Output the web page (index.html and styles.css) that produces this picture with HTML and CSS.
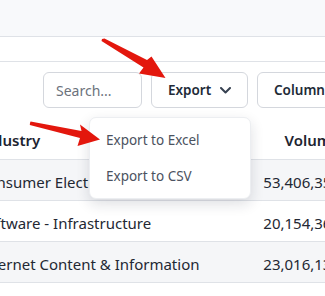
FILE: index.html
```html
<!DOCTYPE html>
<html lang="en">
<head>
  <meta charset="UTF-8" />
  <title>Stocks table</title>
  <link rel="stylesheet" href="styles.css">
</head>
<body>
  <div class="page">
    <div class="topbar"></div>
    <div class="subbar"></div>

    <div class="toolbar">
      <input class="search" type="text" placeholder="Search..." />
      <div class="export-wrap">
        <button class="btn export-btn">Export
          <svg class="chevron" width="11" height="7" viewBox="0 0 11 7">
            <path d="M1 1 L5.5 5.5 L10 1" fill="none" stroke="#374151" stroke-width="2" stroke-linecap="round" stroke-linejoin="round"/>
          </svg>
        </button>
        <div class="menu">
          <div class="menu-item">Export to Excel</div>
          <div class="menu-item">Export to CSV</div>
        </div>
      </div>
      <button class="btn">Columns</button>
    </div>

    <div class="table-wrap">
      <table class="grid">
        <thead>
          <tr><th class="col-industry">Industry</th><th class="num">Volume</th></tr>
        </thead>
        <tbody>
          <tr><td>Consumer Electronics</td><td class="num">53,406,357</td></tr>
          <tr><td>Software - Infrastructure</td><td class="num">20,154,362</td></tr>
          <tr><td>Internet Content &amp; Information</td><td class="num">23,016,132</td></tr>
        </tbody>
      </table>
    </div>
  </div>

  <!-- annotation arrows -->
  <svg class="arrows" width="325" height="296" viewBox="0 0 325 296">
    <polygon fill="#e3170d" points="102,39 104.5,38.6 147,60 151.5,56.5 165.5,78 139,73.5 143.5,67.5 101.5,41"/>
    <polygon fill="#e3170d" points="30,123 30.6,121.5 81.5,131 80,124.5 100,139.5 77.5,146 80,138 29.8,125"/>
  </svg>
</body>
</html>
```

FILE: styles.css
```css
body {
  margin: 0;
  font-family: 'Noto Sans', 'Open Sans', sans-serif;
  color: #212529;
  background: #fff;
  overflow: hidden;
  width: 325px;
  height: 296px;
  position: relative;
}
.page {
  width: 325px;
}
.topbar {
  height: 36px;
  background: #f8f9fb;
  border-bottom: 1px solid #dfe2e7;
}
.subbar {
  height: 24px;
  border-bottom: 1px solid #dfe2e7;
}
.toolbar {
  display: flex;
  gap: 9px;
  padding: 10px 0 10px 43px;
  white-space: nowrap;
}
.search {
  width: 99px;
  height: 36px;
  box-sizing: border-box;
  border: 1px solid #d4d7dd;
  border-radius: 6px;
  padding: 0 12px;
  font-family: inherit;
  font-size: 14px;
  color: #212529;
  outline: none;
}
.search::placeholder {
  color: #6c727c;
}
.btn {
  height: 36px;
  box-sizing: border-box;
  border: 1px solid #d4d7dd;
  border-radius: 6px;
  background: #fff;
  padding: 0 16px;
  font-family: inherit;
  font-size: 13.5px;
  font-weight: 600;
  color: #212a37;
  display: flex;
  align-items: center;
  flex-shrink: 0;
}
.export-wrap {
  position: relative;
}
.export-btn {
  width: 97px;
  justify-content: space-between;
}
.chevron {
  margin-top: 1px;
}
.menu {
  position: absolute;
  top: 45px;
  left: -62px;
  width: 160px;
  padding: 4px 0;
  background: #fff;
  border: 1px solid #eceef1;
  border-radius: 7px;
  box-shadow: 0 5px 14px rgba(20, 30, 50, 0.14);
  z-index: 2;
}
.menu-item {
  height: 36px;
  line-height: 36px;
  padding-left: 16px;
  font-size: 13.5px;
  color: #4b5260;
}
.table-wrap {
  margin-left: -22px;
}
.grid {
  border-collapse: collapse;
  width: 370px;
  font-size: 15px;
}
.grid th {
  height: 41px;
  box-sizing: border-box;
  text-align: left;
  font-weight: 600;
  color: #1d2430;
  border-bottom: 1px solid #dfe2e7;
  padding: 3px 0 0;
}
.col-industry {
  width: 260px;
}
.grid td {
  height: 41px;
  box-sizing: border-box;
  padding: 4px 0 0;
  border-bottom: 1px solid #dfe2e7;
  color: #232833;
}
.grid tbody tr:nth-child(odd) {
  background: #f5f6f8;
}
.grid .num {
  text-align: right;
  padding-right: 8px;
}
.arrows {
  position: absolute;
  top: 0;
  left: 0;
  z-index: 5;
  pointer-events: none;
}
```
